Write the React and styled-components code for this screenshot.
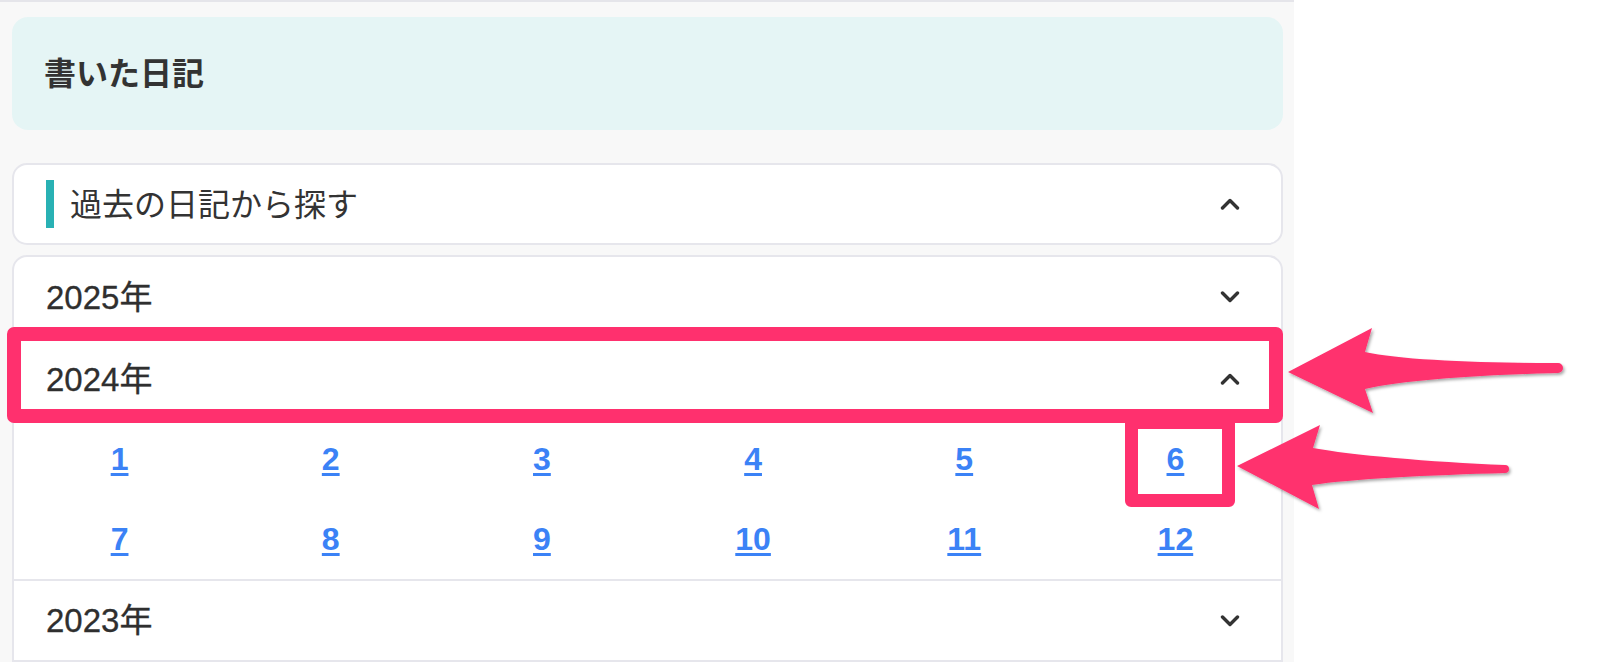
import React from "react";
import styled, { createGlobalStyle } from "styled-components";

const GlobalStyle = createGlobalStyle`
  html, body {
    margin: 0;
    padding: 0;
    background: #ffffff;
    overflow: hidden;
  }
  * { box-sizing: border-box; }
`;

const Page = styled.div`
  position: relative;
  width: 1604px;
  height: 662px;
  font-family: "Liberation Sans", "Noto Sans CJK JP", sans-serif;
  color: #333333;
`;

const Sidebar = styled.aside`
  width: 1294px;
  height: 662px;
  background: #f8f8f8;
  border-top: 2px solid #e5e5ea;
  padding: 15px 11px 0 12px;
  display: flex;
  flex-direction: column;
`;

const HeaderCard = styled.section`
  height: 113px;
  border-radius: 16px;
  background: #e5f5f5;
  display: flex;
  align-items: center;
  padding: 0 32px;
  flex-shrink: 0;
`;

const Title = styled.h2`
  margin: 0;
  padding-bottom: 5px;
  font-family: "Noto Sans CJK JP", sans-serif;
  font-size: 32px;
  font-weight: 700;
  color: #333333;
  line-height: 1;
`;

const SearchCard = styled.div`
  margin-top: 33px;
  height: 82px;
  flex-shrink: 0;
  background: #ffffff;
  border: 2px solid #e6e6ec;
  border-radius: 15px;
  display: flex;
  align-items: center;
  gap: 16px;
  padding: 0 41px 0 32px;
`;

const AccentBar = styled.span`
  width: 8px;
  height: 48px;
  background: #29b1b4;
  flex-shrink: 0;
`;

const SearchLabel = styled.span`
  flex: 1;
  padding-bottom: 5px;
  font-family: "Noto Sans CJK JP", sans-serif;
  font-size: 32px;
  font-weight: 400;
  color: #333333;
  line-height: 1;
`;

const YearList = styled.div`
  margin-top: 10px;
  height: 407px;
  flex-shrink: 0;
  background: #ffffff;
  border: 2px solid #e6e6ec;
  border-radius: 15px 15px 0 0;
  display: flex;
  flex-direction: column;
  overflow: hidden;
`;

const YearRow = styled.div`
  height: ${(p) => p.$height}px;
  flex-shrink: 0;
  display: flex;
  align-items: center;
  padding: 0 41px 0 32px;
  border-top: ${(p) => (p.$divided ? "2px solid #e6e6ec" : "none")};
`;

const YearLabel = styled.span`
  flex: 1;
  font-size: 33px;
  color: #2f2f2f;
  line-height: 1;
  -webkit-text-stroke: 0.3px #2f2f2f;
`;

const MonthGrid = styled.div`
  display: grid;
  grid-template-columns: repeat(6, 1fr);
  grid-auto-rows: 80px;
`;

const MonthCell = styled.div`
  display: flex;
  align-items: center;
  justify-content: center;
`;

const MonthLink = styled.a`
  font-family: "Liberation Sans", sans-serif;
  font-size: 32px;
  font-weight: 700;
  color: #3b82f6;
  text-decoration: underline;
  text-decoration-thickness: 3px;
  text-underline-offset: 3px;
  line-height: 1;
  cursor: pointer;
`;

const ChevronSvg = styled.svg`
  width: 20px;
  height: 12px;
  flex-shrink: 0;
  display: block;
`;

const Highlight = styled.div`
  position: absolute;
  left: ${(p) => p.$left}px;
  top: ${(p) => p.$top}px;
  width: ${(p) => p.$width}px;
  height: ${(p) => p.$height}px;
  border: ${(p) => p.$border}px solid #ff306e;
  border-radius: ${(p) => p.$radius};
  pointer-events: none;
`;

const ArrowLayer = styled.svg`
  position: absolute;
  left: 0;
  top: 0;
  width: 1604px;
  height: 662px;
  pointer-events: none;
  overflow: visible;
`;

function Chevron({ up }) {
  return (
    <ChevronSvg viewBox="0 0 20 12" aria-hidden="true">
      <polyline
        points={up ? "2.5,10 10,2.5 17.5,10" : "2.5,2 10,9.5 17.5,2"}
        fill="none"
        stroke="#333333"
        strokeWidth="3.4"
        strokeLinecap="round"
        strokeLinejoin="round"
      />
    </ChevronSvg>
  );
}

const months = [1, 2, 3, 4, 5, 6, 7, 8, 9, 10, 11, 12];

export default function App() {
  return (
    <>
      <GlobalStyle />
      <Page>
        <Sidebar>
          <HeaderCard>
            <Title>書いた日記</Title>
          </HeaderCard>

          <SearchCard>
            <AccentBar />
            <SearchLabel>過去の日記から探す</SearchLabel>
            <Chevron up />
          </SearchCard>

          <YearList>
            <YearRow $height={80}>
              <YearLabel>2025年</YearLabel>
              <Chevron />
            </YearRow>
            <YearRow $height={82} $divided>
              <YearLabel>2024年</YearLabel>
              <Chevron up />
            </YearRow>
            <MonthGrid>
              {months.map((m) => (
                <MonthCell key={m}>
                  <MonthLink>{m}</MonthLink>
                </MonthCell>
              ))}
            </MonthGrid>
            <YearRow $height={81} $divided>
              <YearLabel>2023年</YearLabel>
              <Chevron />
            </YearRow>
          </YearList>
        </Sidebar>

        <Highlight $left={7} $top={327} $width={1276} $height={96} $border={14} $radius="7px" />
        <Highlight $left={1125} $top={416} $width={110} $height={91} $border={13} $radius="0 0 6px 6px" />

        <ArrowLayer viewBox="0 0 1604 662" aria-hidden="true">
          <defs>
            <filter id="arrowShadow" x="-10%" y="-20%" width="120%" height="150%">
              <feDropShadow dx="1.5" dy="2" stdDeviation="1.5" floodColor="#000" floodOpacity="0.35" />
            </filter>
          </defs>
          <path
            filter="url(#arrowShadow)"
            fill="#ff306e"
            d="M1288,372 L1372,328 L1365,352 C1400,360 1480,363 1558,363 A5,5 0 0 1 1558,373 C1480,375 1405,380 1365,389 L1373,413 Z"
          />
          <path
            filter="url(#arrowShadow)"
            fill="#ff306e"
            d="M1237,466 L1320,425 L1313,448 C1350,455 1430,462 1505,465 A4,4 0 0 1 1505,473 C1430,475 1350,479 1312,485 L1319,509 Z"
          />
        </ArrowLayer>
      </Page>
    </>
  );
}
